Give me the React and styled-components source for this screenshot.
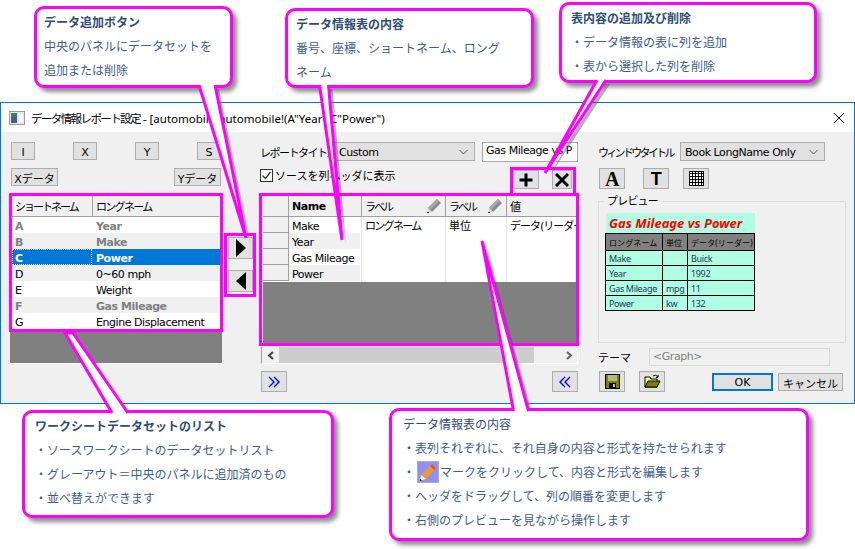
import React from 'react';
import styled, { createGlobalStyle } from 'styled-components';

const MAGENTA = '#ff00ff';
const UI_FONT = '"DejaVu Sans", "Noto Sans CJK JP", sans-serif';
const NOTE_FONT = '"Noto Sans CJK JP", "Noto Sans", sans-serif';

const GlobalStyle = createGlobalStyle`
  html, body {
    margin: 0;
    padding: 0;
    background: #fff;
  }
  * {
    box-sizing: border-box;
  }
`;

const Page = styled.div`
  position: relative;
  width: 855px;
  height: 549px;
  padding-top: 102px;
  overflow: hidden;
  font-family: ${UI_FONT};
  font-size: 11px;
  letter-spacing: -0.45px;
  color: #000;
`;

const Dialog = styled.div`
  width: 855px;
  height: 302px;
  border: 1px solid #0078d7;
  background: #f0f0f0;
`;

const TitleBar = styled.div`
  display: flex;
  align-items: center;
  gap: 6px;
  height: 29px;
  padding: 0 9px 0 8px;
  background: #fff;
  font-family: "Noto Sans", "Noto Sans CJK JP", sans-serif;
  font-size: 11.5px;
  letter-spacing: 0;
`;

const TitleText = styled.span`
  flex: 1;
  white-space: nowrap;
`;

const Squeezed = styled.span`
  letter-spacing: ${(p) => p.$ls}px;
`;

const Body = styled.div`
  display: flex;
  padding: 10px 0 0 8px;
`;

const LeftColumn = styled.div`
  width: 214px;
`;

const ButtonRow = styled.div`
  display: flex;
  justify-content: space-between;
  padding: 0 2px;
  margin-bottom: ${(p) => p.$mb || 8}px;
`;

const Button = styled.div`
  display: flex;
  align-items: center;
  justify-content: center;
  flex: none;
  width: ${(p) => p.$w || 24}px;
  height: ${(p) => p.$h || 18}px;
  background: #e1e1e1;
  border: ${(p) => (p.$primary ? '2px solid #0078d7' : '1px solid #adadad')};
  white-space: nowrap;
  overflow: hidden;
`;

const TextButton = styled(Button)`
  padding-top: 2px;
  letter-spacing: 0;
`;

const Highlight = styled.div`
  border: 3px solid ${MAGENTA};
`;

const ListHeader = styled.div`
  display: grid;
  grid-template-columns: 81px 1fr;
  height: 21px;
  background: #f0f0f0;
  border-bottom: 1px solid #a0a0a0;
  border-right: 1px solid #fff;
`;

const HeadCell = styled.div`
  display: flex;
  align-items: center;
  padding: 0 3px;
  border-right: 1px solid #a0a0a0;
  overflow: hidden;
  white-space: nowrap;
  font-weight: ${(p) => (p.$bold ? 'bold' : 'normal')};
  &:last-child {
    border-right: none;
  }
`;

const ListRow = styled.div`
  display: grid;
  grid-template-columns: 81px 1fr;
  height: 16px;
  line-height: 16px;
  background: ${(p) => (p.$selected ? '#0078d7' : p.$odd ? '#f0f0f0' : '#fff')};
  color: ${(p) => (p.$selected ? '#fff' : p.$used ? '#808080' : '#000')};
  font-weight: ${(p) => (p.$selected || p.$used ? 'bold' : 'normal')};
`;

const ListCell = styled.div`
  padding: 2px 3px 0;
  white-space: nowrap;
  overflow: hidden;
  outline: ${(p) => (p.$focus ? '1px dotted #fff' : 'none')};
  outline-offset: -1px;
  margin-right: 1px;
`;

const ListFill = styled.div`
  height: 32px;
  margin: 0 1px;
  background: #808080;
  border-bottom: 1px solid #fff;
`;

const ArrowFrame = styled(Highlight)`
  display: flex;
  flex-direction: column;
  gap: 11px;
  flex: none;
  width: 32px;
  height: 64px;
  margin: 91px 3px 0 1px;
  padding: 1px;
`;

const MiddleColumn = styled.div`
  width: 320px;
  flex: none;
`;

const TopRow = styled.div`
  display: flex;
  align-items: center;
  height: 19px;
`;

const FieldLabel = styled.span`
  flex: none;
  width: ${(p) => p.$w}px;
  padding-left: ${(p) => p.$pl || 0}px;
  letter-spacing: ${(p) => p.$ls || 0}px;
  white-space: nowrap;
`;

const Select = styled.div`
  display: flex;
  align-items: center;
  justify-content: space-between;
  flex: none;
  width: ${(p) => p.$w}px;
  height: 19px;
  padding: 1px 6px 0 4px;
  background: #e1e1e1;
  border: 1px solid #adadad;
  white-space: nowrap;
`;

const TextBox = styled.div`
  flex: none;
  width: 96px;
  height: 20px;
  margin-left: 7px;
  padding: 1px 3px;
  background: #fff;
  border: 1px solid #a9a9a9;
  overflow: hidden;
  white-space: nowrap;
`;

const SecondRow = styled.div`
  display: flex;
  justify-content: space-between;
  height: 26px;
  margin-top: 6px;
`;

const CheckLabel = styled.label`
  display: flex;
  align-items: center;
  gap: 2px;
  height: 14px;
  margin: 1px 0 0 1px;
  letter-spacing: 0;
`;

const CheckBox = styled.span`
  display: flex;
  width: 13px;
  height: 13px;
  background: #fff;
  border: 1px solid #333;
`;

const AddRemoveFrame = styled.div`
  display: flex;
  justify-content: space-between;
  flex: none;
  width: 66px;
  height: 26px;
  margin-right: 3px;
  padding: 0 1px 0 0;
  border: 3px solid ${MAGENTA};
  border-bottom: none;
`;

const GridHeader = styled.div`
  display: flex;
  height: 21px;
  background: #f0f0f0;
  border-bottom: 1px solid #a0a0a0;
`;

const GridHeadCell = styled(HeadCell)`
  flex: none;
  width: ${(p) => p.$w}px;
  justify-content: space-between;
  &:last-child {
    border-right: 1px solid #a0a0a0;
  }
`;

const GridViewport = styled.div`
  width: 313px;
  margin-left: 1px;
  overflow: hidden;
`;

const GridBody = styled.div`
  display: flex;
  height: 65px;
  background: #fff;
`;

const RowHeaders = styled.div`
  flex: none;
  width: 26px;
`;

const RowHeader = styled.div`
  height: 16px;
  background: #f0f0f0;
  border-right: 1px solid #a0a0a0;
  border-bottom: 1px solid #a0a0a0;
`;

const NameColumn = styled.div`
  flex: none;
  width: 73px;
  padding-right: 1px;
  border-right: 1px solid #e6e6e6;
`;

const NameCell = styled.div`
  height: 16px;
  padding: 2px 0 0 3px;
  line-height: 16px;
  white-space: nowrap;
  background: ${(p) => (p.$odd ? '#f0f0f0' : '#fff')};
`;

const DataColumn = styled.div`
  flex: none;
  width: ${(p) => p.$w}px;
  height: 65px;
  padding: 2px 0 0 3px;
  line-height: 16px;
  letter-spacing: 0;
  white-space: nowrap;
  overflow: hidden;
  border-right: 1px solid #e6e6e6;
`;

const GridFill = styled.div`
  height: 61px;
  background: #808080;
`;

const ScrollBar = styled.div`
  display: flex;
  align-items: stretch;
  height: 17px;
  margin: 1px 1px 0 2px;
  background: #f0f0f0;
  border-left: 1px solid #a0a0a0;
  border-bottom: 1px solid #fff;
  border-right: 1px solid #fff;
`;

const ScrollArrow = styled.div`
  display: flex;
  align-items: center;
  justify-content: center;
  flex: none;
  width: 17px;
`;

const ScrollThumb = styled.div`
  width: 255px;
  background: #cdcdcd;
`;

const ScrollTrack = styled.div`
  flex: 1;
`;

const MiddleFooter = styled.div`
  display: flex;
  justify-content: space-between;
  margin: 7px 1px 0 2px;
`;

const RightColumn = styled.div`
  width: 248px;
  margin-left: 19px;
  flex: none;
`;

const IconRow = styled.div`
  display: flex;
  gap: 14px;
  margin: 7px 0 0 1px;
  & > :first-child {
    margin-right: 4px;
  }
`;

const GroupBox = styled.div`
  position: relative;
  height: 142px;
  margin-top: 12px;
  padding: 11px 0 0 6px;
  border: 1px solid #dcdcdc;
`;

const Legend = styled.span`
  position: absolute;
  top: -7px;
  left: 5px;
  padding: 0 3px;
  background: #f0f0f0;
  line-height: 13px;
  letter-spacing: -0.8px;
`;

const Preview = styled.div`
  width: 150px;
  font-family: "Noto Sans", "Noto Sans CJK JP", sans-serif;
  font-size: 9px;
  letter-spacing: -0.35px;
`;

const PreviewTitle = styled.div`
  height: 20px;
  margin-left: 1px;
  padding-left: 3px;
  background: #b0ffe4;
  color: #ff0000;
  font-size: 13px;
  font-weight: bold;
  font-style: italic;
  line-height: 20px;
  letter-spacing: 0;
  white-space: nowrap;
`;

const PreviewTable = styled.div`
  display: grid;
  grid-template-columns: 57px 25px 1fr;
  grid-template-rows: 17px repeat(4, 15px);
  border-top: 1px solid #000;
  border-left: 1px solid #000;
  background: #b0ffe4;
  color: #1a3a4a;
`;

const PreviewCell = styled.div`
  display: flex;
  align-items: center;
  padding-left: 3px;
  border-right: 1px solid #000;
  border-bottom: 1px solid #000;
  white-space: nowrap;
  overflow: hidden;
  background: ${(p) => (p.$head ? '#808080' : 'transparent')};
  color: ${(p) => (p.$head ? '#000' : 'inherit')};
  font-size: ${(p) => (p.$head ? '8px' : '9px')};
  letter-spacing: ${(p) => (p.$head ? '0.1px' : '-0.35px')};
`;

const ThemeRow = styled.div`
  display: flex;
  align-items: center;
  margin-top: 5px;
`;

const ThemeInput = styled.div`
  width: 181px;
  height: 18px;
  line-height: 16px;
  padding-left: 3px;
  border: 1px solid #d9d9d9;
  color: #808080;
`;

const FooterRow = styled.div`
  display: flex;
  align-items: center;
  margin: 5px 0 0 1px;
`;

const FooterIcons = styled.div`
  display: flex;
  gap: 14px;
  width: 113px;
`;

const FooterButtons = styled.div`
  display: flex;
  gap: 5px;
`;

const Callout = styled.div`
  position: absolute;
  left: ${(p) => p.$x}px;
  top: ${(p) => p.$y}px;
  width: ${(p) => p.$w}px;
  height: ${(p) => p.$h}px;
  padding: 1px 0 0 ${(p) => p.$pl || 10}px;
  background: #fff;
  border: 3px solid ${MAGENTA};
  border-radius: 10px;
  box-shadow: 4px 4px 4px rgba(80, 80, 80, 0.65);
  font-family: ${NOTE_FONT};
  font-size: 12px;
  line-height: 24px;
  letter-spacing: 0;
  color: #3b5d91;
  white-space: nowrap;
`;

const NoteTitle = styled.div`
  color: #2f4d78;
  font-weight: ${(p) => (p.$plain ? 'normal' : 'bold')};
`;

const NoteLine = styled.div`
  display: flex;
  align-items: center;
  height: 24px;
`;

const InlineIcon = styled.span`
  display: flex;
  margin: 0 1px 0 2px;
`;

const TailLayer = styled.svg`
  position: absolute;
  left: 0;
  top: 0;
  pointer-events: none;
`;

const ArrowIcon = ({ left }) => (
  <svg width="12" height="20" viewBox="0 0 12 20">
    <path d={left ? 'M11 1 L1 10 L11 19 Z' : 'M1 1 L11 10 L1 19 Z'} fill="#000" />
  </svg>
);

const Chevron = () => (
  <svg width="9" height="6" viewBox="0 0 9 6">
    <path d="M0.5 1 L4.5 5 L8.5 1" fill="none" stroke="#555" strokeWidth="1" />
  </svg>
);

const AppIcon = () => (
  <svg width="16" height="14" viewBox="0 0 16 14">
    <rect x="0.5" y="0.5" width="15" height="13" fill="#e8e8e8" stroke="#9a9a9a" />
    <rect x="2" y="2" width="6" height="10" fill="#3c7a78" />
    <rect x="2" y="6" width="6" height="6" fill="#3f5f8f" />
    <rect x="10" y="3" width="4" height="8" fill="#f8f8f8" />
  </svg>
);

const CloseIcon = () => (
  <svg width="12" height="12" viewBox="0 0 12 12">
    <path d="M1 1 L11 11 M11 1 L1 11" stroke="#000" strokeWidth="1" />
  </svg>
);

const GrayPencil = () => (
  <svg width="16" height="16" viewBox="0 0 16 16">
    <path d="M11 1 L15 5 L6 14 L2 10 Z" fill="#8a8a8a" />
    <path d="M11 1 L13 3 L4 12 L2 10 Z" fill="#a8a8a8" />
    <path d="M2 10 L6 14 L1 15 Z" fill="#d8d8d8" />
    <rect x="1" y="14" width="2" height="1" fill="#333" />
  </svg>
);

const ColorPencil = () => (
  <svg width="22" height="22" viewBox="0 0 22 22">
    <rect x="0.5" y="0.5" width="21" height="21" fill="#8f8ff5" stroke="#b0b0b0" />
    <path d="M15 3 L19 7 L9 18 L4 14 Z" fill="#f09a2a" />
    <path d="M15 3 L19 7 L17 9 L13 5 Z" fill="#e85050" />
    <path d="M4 14 L9 18 L3 20 Z" fill="#f4e8d0" />
    <path d="M3 18 L5 19.5 L3 20 Z" fill="#000" />
  </svg>
);

const PlusIcon = () => (
  <svg width="14" height="14" viewBox="0 0 14 14">
    <path d="M7 0.5 V13.5 M0.5 7 H13.5" stroke="#000" strokeWidth="3" />
  </svg>
);

const CrossIcon = () => (
  <svg width="14" height="14" viewBox="0 0 14 14">
    <path d="M1 1 L13 13 M13 1 L1 13" stroke="#000" strokeWidth="3" />
  </svg>
);

const SerifA = styled.span`
  font-family: "Liberation Serif", serif;
  font-size: 20px;
  font-weight: bold;
  line-height: 1;
`;

const BoldT = styled.span`
  font-family: "Liberation Sans", sans-serif;
  font-size: 18px;
  font-weight: bold;
  line-height: 1;
`;

const GridIcon = () => (
  <svg width="15" height="15" viewBox="0 0 15 15">
    <rect x="0.5" y="0.5" width="14" height="14" fill="#fff" stroke="#000" />
    <path d="M0 2.5 H15 M3.5 0 V15 M6.5 0 V15 M9.5 0 V15 M12.5 0 V15 M0 5.5 H15 M0 8.5 H15 M0 11.5 H15" stroke="#000" />
  </svg>
);

const DoubleChevron = ({ left }) => (
  <svg width="12" height="12" viewBox="0 0 12 12">
    <path
      d={left ? 'M6 1 L1 6 L6 11 M11 1 L6 6 L11 11' : 'M1 1 L6 6 L1 11 M6 1 L11 6 L6 11'}
      fill="none"
      stroke="#0000ff"
      strokeWidth="1.4"
    />
  </svg>
);

const SaveIcon = () => (
  <svg width="15" height="15" viewBox="0 0 15 15">
    <rect x="0.5" y="0.5" width="14" height="14" fill="#808000" stroke="#000" />
    <rect x="3" y="1" width="9" height="6" fill="#b8b880" />
    <rect x="4" y="9" width="7" height="5" fill="#000" />
    <rect x="8" y="10" width="2" height="3" fill="#c0c0c0" />
  </svg>
);

const OpenIcon = () => (
  <svg width="17" height="15" viewBox="0 0 17 15">
    <path d="M1 3 H6 L7 5 H13 V13 H1 Z" fill="#ffff99" stroke="#000" />
    <path d="M1 13 L4 7 H16 L13 13 Z" fill="#808000" stroke="#000" />
    <path d="M9 2 Q12 0 14 3 M14 1 V3.5 H12" fill="none" stroke="#000" />
  </svg>
);

// leader lines of the callouts: sides are stroked, the base stays open into the callout
const tails = [
  ['199,85', '246,238', '215,85'],
  ['319.5,85', '342,240', '328.5,85'],
  ['597,80', '545,173', '606,80'],
  ['112,413', '65,333', '73,333', '128,413'],
  ['513.5,411', '482,241', '528.5,411'],
];

const TailShadows = () => (
  <TailLayer width="855" height="549" viewBox="0 0 855 549">
    {tails.map((points) => (
      <polygon key={points[0]} points={points.join(' ')} fill="#505050" opacity="0.45" transform="translate(4 4)" />
    ))}
  </TailLayer>
);

const Tails = () => (
  <TailLayer width="855" height="549" viewBox="0 0 855 549">
    {tails.map((points) => (
      <g key={points[0]}>
        <polygon points={points.join(' ')} fill="#fff" />
        <polyline points={points.join(' ')} fill="none" stroke={MAGENTA} strokeWidth="3" />
      </g>
    ))}
  </TailLayer>
);

const listRows = [
  { short: 'A', long: 'Year', used: true },
  { short: 'B', long: 'Make', used: true, odd: true },
  { short: 'C', long: 'Power', selected: true },
  { short: 'D', long: '0~60 mph', odd: true },
  { short: 'E', long: 'Weight' },
  { short: 'F', long: 'Gas Mileage', used: true, odd: true },
  { short: 'G', long: 'Engine Displacement' },
];

const names = ['Make', 'Year', 'Gas Mileage', 'Power'];

const previewRows = [
  ['Make', '', 'Buick'],
  ['Year', '', '1992'],
  ['Gas Mileage', 'mpg', '11'],
  ['Power', 'kw', '132'],
];

const App = () => (
  <Page>
    <GlobalStyle />
    <Dialog>
      <TitleBar>
        <AppIcon />
        <TitleText>
          <Squeezed $ls={-1.6}>データ情報レポート設定</Squeezed> - [automobile]automobile!(A"Year",C"Power")
        </TitleText>
        <CloseIcon />
      </TitleBar>
      <Body>
        <LeftColumn>
          <ButtonRow>
            {['I', 'X', 'Y', 'S'].map((label) => (
              <TextButton key={label}>{label}</TextButton>
            ))}
          </ButtonRow>
          <ButtonRow $mb={7}>
            <TextButton $w={47}>Xデータ</TextButton>
            <TextButton $w={47}>Yデータ</TextButton>
          </ButtonRow>
          <Highlight>
            <ListHeader>
              <HeadCell><Squeezed $ls={-2}>ショートネーム</Squeezed></HeadCell>
              <HeadCell><Squeezed $ls={-1.7}>ロングネーム</Squeezed></HeadCell>
            </ListHeader>
            {listRows.map((row) => (
              <ListRow key={row.short} $used={row.used} $odd={row.odd} $selected={row.selected}>
                <ListCell $focus={row.selected}>{row.short}</ListCell>
                <ListCell>{row.long}</ListCell>
              </ListRow>
            ))}
          </Highlight>
          <ListFill />
        </LeftColumn>

        <ArrowFrame>
          <Button $w={25} $h={22}><ArrowIcon /></Button>
          <Button $w={25} $h={22}><ArrowIcon left /></Button>
        </ArrowFrame>

        <MiddleColumn>
          <TopRow>
            <FieldLabel $w={75} $pl={1} $ls={-1.5}>レポートタイトル</FieldLabel>
            <Select $w={141}>
              <span>Custom</span>
              <Chevron />
            </Select>
            <TextBox>Gas Mileage vs P</TextBox>
          </TopRow>
          <SecondRow>
            <CheckLabel>
              <CheckBox>
                <svg width="11" height="11" viewBox="0 0 11 11">
                  <path d="M1.5 5.5 L4.5 8.5 L9.5 2" fill="none" stroke="#333" strokeWidth="1.3" />
                </svg>
              </CheckBox>
              ソースを列ヘッダに表示
            </CheckLabel>
            <AddRemoveFrame>
              <Button $w={26} $h={19}><PlusIcon /></Button>
              <Button $w={20} $h={19}><CrossIcon /></Button>
            </AddRemoveFrame>
          </SecondRow>
          <Highlight>
            <GridViewport>
              <GridHeader>
                <GridHeadCell $w={26} />
                <GridHeadCell $w={73} $bold>Name</GridHeadCell>
                <GridHeadCell $w={84}><Squeezed $ls={-2}>ラベル</Squeezed><GrayPencil /></GridHeadCell>
                <GridHeadCell $w={61}><Squeezed $ls={-2}>ラベル</Squeezed><GrayPencil /></GridHeadCell>
                <GridHeadCell $w={70}>値</GridHeadCell>
              </GridHeader>
              <GridBody>
                <RowHeaders>
                  {names.map((name) => (
                    <RowHeader key={name} />
                  ))}
                </RowHeaders>
                <NameColumn>
                  {names.map((name, i) => (
                    <NameCell key={name} $odd={i % 2 === 1}>{name}</NameCell>
                  ))}
                </NameColumn>
                <DataColumn $w={84}><Squeezed $ls={-1.7}>ロングネーム</Squeezed></DataColumn>
                <DataColumn $w={61}>単位</DataColumn>
                <DataColumn $w={70}><Squeezed $ls={-1}>データ(リーダー</Squeezed></DataColumn>
              </GridBody>
              <GridFill />
            </GridViewport>
          </Highlight>
          <ScrollBar>
            <ScrollArrow>
              <svg width="8" height="9" viewBox="0 0 8 9">
                <path d="M6 1 L2 4.5 L6 8" fill="none" stroke="#404040" strokeWidth="2" />
              </svg>
            </ScrollArrow>
            <ScrollThumb />
            <ScrollTrack />
            <ScrollArrow>
              <svg width="8" height="9" viewBox="0 0 8 9">
                <path d="M2 1 L6 4.5 L2 8" fill="none" stroke="#606060" strokeWidth="2" />
              </svg>
            </ScrollArrow>
          </ScrollBar>
          <MiddleFooter>
            <Button $w={26} $h={21}><DoubleChevron /></Button>
            <Button $w={26} $h={21}><DoubleChevron left /></Button>
          </MiddleFooter>
        </MiddleColumn>

        <RightColumn>
          <TopRow>
            <FieldLabel $w={82} $ls={-2.7}>ウィンドウタイトル</FieldLabel>
            <Select $w={145}>
              <span>Book LongName Only</span>
              <Chevron />
            </Select>
          </TopRow>
          <IconRow>
            <Button $w={26} $h={21}><SerifA>A</SerifA></Button>
            <Button $w={26} $h={21}><BoldT>T</BoldT></Button>
            <Button $w={26} $h={21}><GridIcon /></Button>
          </IconRow>
          <GroupBox>
            <Legend>プレビュー</Legend>
            <Preview>
              <PreviewTitle>Gas Mileage vs Power</PreviewTitle>
              <PreviewTable>
                <PreviewCell $head>ロングネーム</PreviewCell>
                <PreviewCell $head>単位</PreviewCell>
                <PreviewCell $head>データ(リーダー)</PreviewCell>
                {previewRows.map((row) =>
                  row.map((text, i) => <PreviewCell key={row[0] + i}>{text}</PreviewCell>)
                )}
              </PreviewTable>
            </Preview>
          </GroupBox>
          <ThemeRow>
            <FieldLabel $w={51}>テーマ</FieldLabel>
            <ThemeInput>&lt;Graph&gt;</ThemeInput>
          </ThemeRow>
          <FooterRow>
            <FooterIcons>
              <Button $w={26} $h={21}><SaveIcon /></Button>
              <Button $w={26} $h={21}><OpenIcon /></Button>
            </FooterIcons>
            <FooterButtons>
              <TextButton $w={61} $primary>OK</TextButton>
              <TextButton $w={65}>キャンセル</TextButton>
            </FooterButtons>
          </FooterRow>
        </RightColumn>
      </Body>
    </Dialog>

    <TailShadows />

    <Callout $x={34} $y={6} $w={199} $h={82} $pl={7}>
      <NoteTitle>データ追加ボタン</NoteTitle>
      <div>中央のパネルにデータセットを</div>
      <div>追加または削除</div>
    </Callout>
    <Callout $x={285} $y={8} $w={249} $h={80} $pl={8}>
      <NoteTitle>データ情報表の内容</NoteTitle>
      <div>番号、座標、ショートネーム、ロング</div>
      <div>ネーム</div>
    </Callout>
    <Callout $x={559} $y={2} $w={258} $h={81} $pl={9}>
      <NoteTitle>表内容の追加及び削除</NoteTitle>
      <div>・データ情報の表に列を追加</div>
      <div>・表から選択した列を削除</div>
    </Callout>
    <Callout $x={22} $y={410} $w={312} $h={108}>
      <NoteTitle>ワークシートデータセットのリスト</NoteTitle>
      <div>・ソースワークシートのデータセットリスト</div>
      <div>・グレーアウト＝中央のパネルに追加済のもの</div>
      <div>・並べ替えができます</div>
    </Callout>
    <Callout $x={389} $y={408} $w={420} $h={133} $pl={11}>
      <NoteTitle $plain>データ情報表の内容</NoteTitle>
      <div>・表列それぞれに、それ自身の内容と形式を持たせられます</div>
      <NoteLine>・<InlineIcon><ColorPencil /></InlineIcon>マークをクリックして、内容と形式を編集します</NoteLine>
      <div>・ヘッダをドラッグして、列の順番を変更します</div>
      <div>・右側のプレビューを見ながら操作します</div>
    </Callout>

    <Tails />
  </Page>
);

export default App;
